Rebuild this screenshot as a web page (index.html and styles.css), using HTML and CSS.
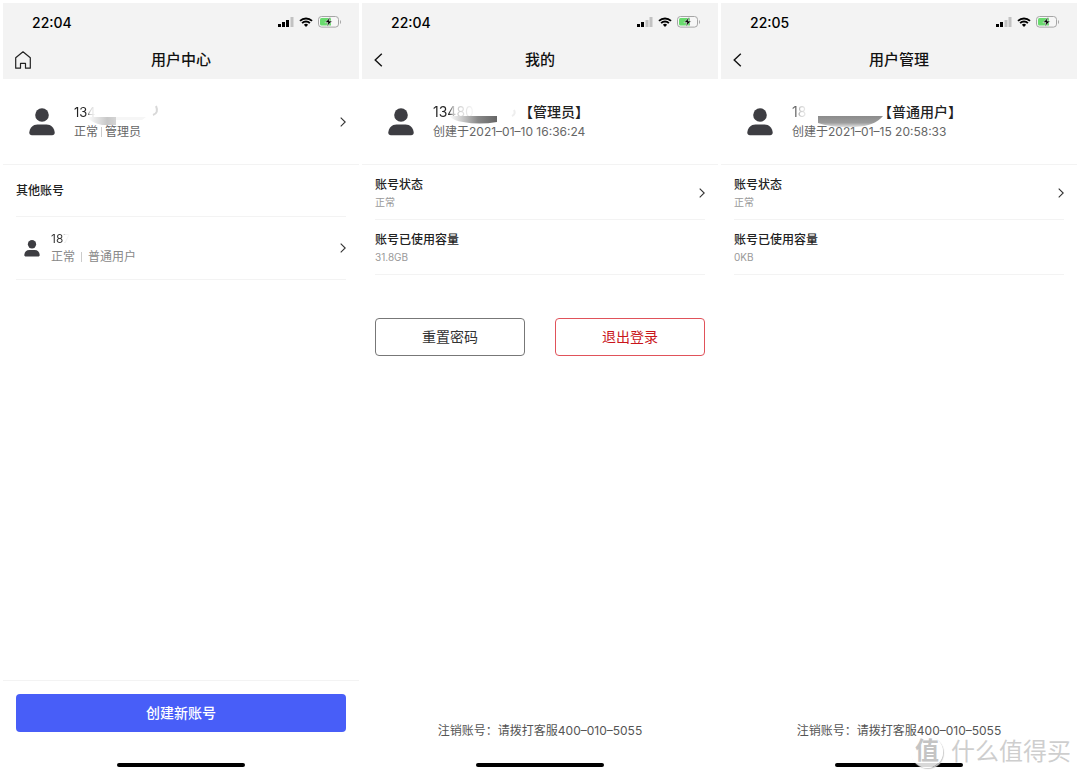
FILE: index.html
```html
<!DOCTYPE html>
<html lang="zh-CN">
<head>
<meta charset="utf-8">
<meta name="viewport" content="width=device-width, initial-scale=1">
<title>用户中心</title>
<link rel="stylesheet" href="styles.css">
</head>
<body>
<svg class="defs" width="0" height="0" aria-hidden="true">
  <defs>
    <linearGradient id="smudge-a" x1="0" x2="1"><stop offset="0" stop-color="#fff"/><stop offset=".7" stop-color="#c8c8c8"/><stop offset="1" stop-color="#d4d4d4"/></linearGradient>
    <linearGradient id="smudge-b" x1="0" x2="1"><stop offset="0" stop-color="#fff"/><stop offset=".35" stop-color="#bbb"/><stop offset=".6" stop-color="#888"/><stop offset="1" stop-color="#666"/></linearGradient>
    <linearGradient id="smudge-c" x1="0" x2="0" y1="0" y2="1"><stop offset="0" stop-color="#777"/><stop offset=".6" stop-color="#8a8a8a"/><stop offset="1" stop-color="#ddd"/></linearGradient>
    <symbol id="wifi" viewBox="0 0 14 10">
      <path d="M1 3.9a8.6 8.6 0 0 1 12 0M3.1 6.1a5.5 5.5 0 0 1 7.8 0" fill="none" stroke="#000" stroke-width="1.9"/>
      <path d="M4.9 7.8a3 3 0 0 1 4.2 0L7 10z"/>
    </symbol>
    <symbol id="battery" viewBox="0 0 24 12">
      <rect x=".5" y=".5" width="20" height="10.6" rx="3" fill="#f6f6f6" stroke="#a5a5a5"/>
      <path d="M22 4v4c1.4-.6 1.4-3.400 0-4z" fill="#a5a5a5"/>
      <path d="M3.500 2H13v7.600H3.500A1.500 1.500 0 0 1 2 8.100V3.500A1.500 1.500 0 0 1 3.500 2z" fill="#69db6e"/>
      <path d="M12.400 1L7 6.600h3L8.600 10.800 14.200 5h-3.100z" stroke="#f3f3f3" stroke-width=".6"/>
    </symbol>
    <symbol id="person" viewBox="0 0 26 28">
      <circle cx="13" cy="7" r="6.800"/><path d="M.3 24.500C.8 19.500 4 16.400 8.500 16.400h9c4.500 0 7.700 3.100 8.200 8.100.1 1.700-1 2.700-2.600 2.700H2.900C1.300 27.200.2 26.200.3 24.500z"/>
    </symbol>
    <symbol id="right" viewBox="0 0 6 10"><path d="M.7.6L5.200 5 .7 9.400" fill="none" stroke="#333" stroke-width="1.100"/></symbol>
    <symbol id="left" viewBox="0 0 9 14"><path d="M7.800.7L1.200 7l6.600 6.300" fill="none" stroke="#111" stroke-width="1.400"/></symbol>
  </defs>
</svg>
<main class="screens">
  <section class="screen">
    <header class="top">
      <div class="status"><time>22:04</time><span class="signals">
        <svg width="16" height="10" viewBox="0 0 16 10"><path d="M0 7h3v3H0zM4 5h3v5H4zM8 3h3v7H8z"/><path d="M12.500 0h3v10h-3z" fill="#c2c2c2"/></svg>
        <svg width="14" height="10"><use href="#wifi"/></svg><svg width="24" height="12"><use href="#battery"/></svg></span></div>
      <div class="nav"><button class="icon-button" aria-label="首页"><svg width="16" height="18" viewBox="0 0 16 18"><path d="M.7 6.700L8 .8l7.300 5.900v10.500h-4.800v-4.800h-5v4.800H.7z" fill="none" stroke="#222" stroke-width="1.200" stroke-linejoin="round"/></svg></button><h1>用户中心</h1></div>
    </header>
    <div class="profile">
      <svg class="avatar"><use href="#person"/></svg>
      <div class="info compact">
        <p class="name"><span class="number fade three">134</span></p>
        <p class="meta">正常<i class="bar"></i>管理员</p>
        <svg class="smudge" width="100" height="44" viewBox="0 0 100 44" aria-hidden="true"><path d="M13 15h29v8H28q-10-2-15-8z" fill="url(#smudge-a)"/><path d="M42 15h30l-4 3H42z" fill="#f6f6f6"/><path d="M82 4q3 7-3 9" fill="none" stroke="#d8d8d8" stroke-width="2"/></svg>
      </div>
      <button class="arrow" aria-label="查看账号"><svg width="6" height="10"><use href="#right"/></svg></button>
    </div>
    <div class="others">
      <h2>其他账号</h2>
      <div class="account">
        <svg class="avatar small"><use href="#person"/></svg>
        <div class="info"><p class="name"><span class="fade two">187</span></p><p class="meta pale">正常<i class="bar wide"></i>普通用户</p></div>
        <button class="arrow" aria-label="查看普通用户"><svg width="6" height="10"><use href="#right"/></svg></button>
      </div>
    </div>
    <footer class="create"><button class="primary">创建新账号</button></footer>
    <div class="home-bar"></div>
  </section>

  <section class="screen">
    <header class="top">
      <div class="status"><time>22:04</time><span class="signals">
        <svg width="16" height="10" viewBox="0 0 16 10"><path d="M0 7h3v3H0zM4 5h3v5H4z"/><path d="M8.500 3h3v7h-3zM12.500 0h3v10h-3z" fill="#c2c2c2"/></svg>
        <svg width="14" height="10"><use href="#wifi"/></svg><svg width="24" height="12"><use href="#battery"/></svg></span></div>
      <div class="nav"><button class="icon-button" aria-label="返回"><svg width="9" height="14"><use href="#left"/></svg></button><h1>我的</h1></div>
    </header>
    <div class="profile">
      <svg class="avatar"><use href="#person"/></svg>
      <div class="info">
        <p class="name"><span class="number fade">13480</span>【管理员】</p>
        <p class="meta">创建于2021–01–10 16:36:24</p>
        <svg class="smudge" width="100" height="44" viewBox="0 0 100 44" aria-hidden="true"><path d="M16 15h48v6q-18 3-34 0-9-1-14-6z" fill="url(#smudge-b)"/><path d="M81 9q2 4-2 6" fill="none" stroke="#eee" stroke-width="2"/></svg>
      </div>
    </div>
    <dl class="details">
      <div class="row"><div><dt>账号状态</dt><dd>正常</dd></div><button class="arrow" aria-label="账号状态"><svg width="6" height="10"><use href="#right"/></svg></button></div>
      <div class="row"><div><dt>账号已使用容量</dt><dd>31.8GB</dd></div></div>
    </dl>
    <div class="actions"><button class="outline">重置密码</button><button class="outline danger">退出登录</button></div>
    <p class="contact">注销账号：请拨打客服400–010–5055</p>
    <div class="home-bar"></div>
  </section>

  <section class="screen">
    <header class="top">
      <div class="status"><time>22:05</time><span class="signals">
        <svg width="16" height="10" viewBox="0 0 16 10"><path d="M0 7h3v3H0zM4 5h3v5H4z"/><path d="M8.500 3h3v7h-3zM12.500 0h3v10h-3z" fill="#c2c2c2"/></svg>
        <svg width="14" height="10"><use href="#wifi"/></svg><svg width="24" height="12"><use href="#battery"/></svg></span></div>
      <div class="nav"><button class="icon-button" aria-label="返回"><svg width="9" height="14"><use href="#left"/></svg></button><h1>用户管理</h1></div>
    </header>
    <div class="profile">
      <svg class="avatar"><use href="#person"/></svg>
      <div class="info">
        <p class="name"><span class="number fade one">18</span>【普通用户】</p>
        <p class="meta">创建于2021–01–15 20:58:33</p>
        <svg class="smudge" width="100" height="44" viewBox="0 0 100 44" aria-hidden="true"><path d="M26 15h65q-8 10-28 11-24 1-37-4z" fill="url(#smudge-c)" opacity=".85"/></svg>
      </div>
    </div>
    <dl class="details">
      <div class="row"><div><dt>账号状态</dt><dd>正常</dd></div><button class="arrow" aria-label="账号状态"><svg width="6" height="10"><use href="#right"/></svg></button></div>
      <div class="row"><div><dt>账号已使用容量</dt><dd>0KB</dd></div></div>
    </dl>
    <p class="contact">注销账号：请拨打客服400–010–5055</p>
    <div class="home-bar"></div>
  </section>
</main>
<div class="watermark"><span class="seal">值</span><span>什么值得买</span></div>
</body>
</html>
```
FILE: styles.css
```css
* { box-sizing: border-box; }
body { margin: 0; background: #fff; color: #222; font-family: Inter, "Noto Sans CJK SC", sans-serif; font-size: 12px; position: relative; }
h1, h2, p, dl, dd { margin: 0; }
button { font: inherit; color: inherit; background: none; border: 0; padding: 0; cursor: pointer; }
svg { display: block; flex: none; }
.defs { position: absolute; }
.screens { min-height: 100vh; padding: 3px; display: grid; grid-template-columns: repeat(3, 1fr); gap: 3px; }
.screen { display: flex; flex-direction: column; }
.top { background: #f3f3f3; height: 76px; }
.status { height: 38px; padding: 0 17px 0 29px; display: flex; align-items: center; justify-content: space-between; }
.status time { font-size: 14px; font-weight: 500; color: #000; }
.signals { display: flex; align-items: center; gap: 5px; }
.nav { height: 38px; padding: 0 12px; display: grid; grid-template-columns: 24px 1fr 24px; align-items: center; }
.icon-button { display: flex; }
h1 { font-size: 15px; line-height: 20px; font-weight: 500; color: #111; text-align: center; }
.profile { height: 86px; padding: 0 13px 0 26px; display: flex; align-items: center; border-bottom: 1px solid #f3f3f3; }
.avatar { width: 26px; height: 28px; margin-right: 19px; fill: #3d3d42; }
.avatar.small { width: 16px; height: 17px; margin-right: 11px; }
.info { flex: 1; position: relative; }
.name { font-size: 14px; line-height: 20px; font-weight: 500; display: flex; color: #222; }
.compact .name { font-size: 13px; }
.info:not(.compact) > .smudge { top: -1px; }
.number { width: 86px; font-weight: 400; }
.meta { font-size: 12px; line-height: 20px; color: #666; display: flex; align-items: center; white-space: pre; }
.pale { color: #888; }
.bar { width: 1px; height: 10px; margin: 0 3px; background: #ccc; }
.bar.wide { margin: 0 6px; }
.fade { color: transparent; background: linear-gradient(90deg, #222 16px, #bbb 20px, #ddd 30px, #fff 44px); background-clip: text; }
.fade.one { background-image: linear-gradient(90deg, #666 5px, #ccc 8px, #fff 18px); background-clip: text; }
.fade.two { background-image: linear-gradient(90deg, #333 11px, #eee 14px, #fff 20px); background-clip: text; font-weight: 400; font-size: 12px; }
.fade.three { background-image: linear-gradient(90deg, #222 13px, #ccc 16px, #fff 22px); background-clip: text; }
.smudge { position: absolute; left: 0; top: 0; }
.arrow { display: flex; align-items: center; }
.others { padding: 0 13px; }
h2 { font-size: 12px; font-weight: 500; line-height: 20px; padding: 16px 0 15px; border-bottom: 1px solid #f3f3f3; }
.account { height: 63px; padding-left: 8px; display: flex; align-items: center; border-bottom: 1px solid #f3f3f3; }
.account .name, .account .meta { line-height: 18px; }
.create { margin-top: auto; padding: 13px; border-top: 1px solid #f3f3f3; }
.primary { display: block; width: 100%; height: 38px; padding-bottom: 2px; border-radius: 4px; background: #485ef8; color: #fff; font-size: 14px; font-weight: 500; }
.home-bar { width: 128px; height: 4px; border-radius: 2px; background: #000; margin: 18px auto 7px; }
.details { padding: 0 13px; }
.row { height: 55px; padding-top: 1px; display: flex; align-items: center; justify-content: space-between; border-bottom: 1px solid #f3f3f3; }
dt { font-size: 12px; line-height: 18px; font-weight: 500; }
dd { font-size: 10px; line-height: 16px; color: #999; }
.actions { padding: 43px 13px 0; display: grid; grid-template-columns: 1fr 1fr; gap: 30px; }
.outline { height: 38px; padding-bottom: 2px; border: 1px solid #777; border-radius: 4px; font-size: 14px; color: #333; }
.danger { border-color: #e0525a; color: #c9151b; }
.contact { margin-top: auto; line-height: 20px; text-align: center; color: #555; }
.contact + .home-bar { margin-top: 22px; }
.watermark { position: absolute; right: 9px; bottom: 8px; display: flex; align-items: center; gap: 8px; font-size: 24px; line-height: 34px; color: rgba(190, 190, 190, .75); }
.seal { width: 32px; height: 32px; border-radius: 50%; line-height: 30px; text-align: center; font-weight: 700; color: #c4c4c4; background: rgba(255, 255, 255, .85); box-shadow: 1px 1px 1px #ccc; }
```
